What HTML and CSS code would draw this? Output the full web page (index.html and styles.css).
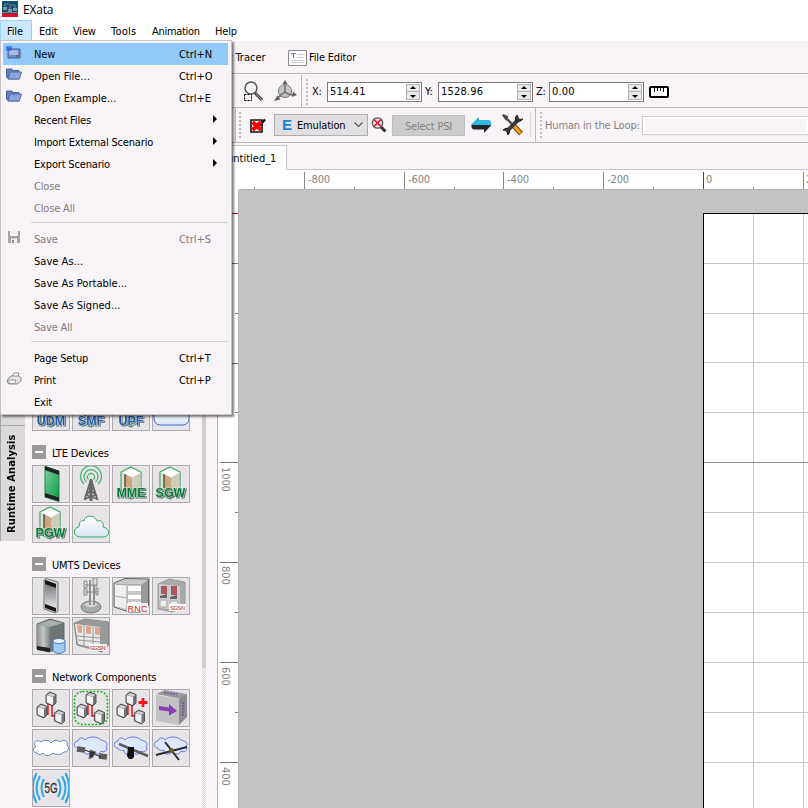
FILE: index.html
```
<!DOCTYPE html>
<html lang="en">
<head>
<meta charset="utf-8">
<title>EXata</title>
<link rel="stylesheet" href="styles.css">
</head>
<body>
<svg class="defs" width="0" height="0">
  <defs>
    <linearGradient id="gGreen" x1="0" y1="0" x2="1" y2="1"><stop offset="0" stop-color="#7fd09a"/><stop offset="1" stop-color="#0b9a48"/></linearGradient>
    <linearGradient id="gGray" x1="0" y1="0" x2="0" y2="1"><stop offset="0" stop-color="#6d6a6f"/><stop offset="1" stop-color="#e9e7ea"/></linearGradient>
    <linearGradient id="gMetal" x1="0" y1="0" x2="1" y2="0"><stop offset="0" stop-color="#8d9192"/><stop offset=".5" stop-color="#c4c7c8"/><stop offset="1" stop-color="#7d8182"/></linearGradient>
    <linearGradient id="gSky" x1="0" y1="0" x2="0" y2="1"><stop offset="0" stop-color="#ffffff"/><stop offset="1" stop-color="#dbe6f5"/></linearGradient>
    <g id="server">
      <path d="M18 1 28 6V27L18 33 8 28V6Z" fill="#efeee8" stroke="#38a860" stroke-width="1.200"/>
      <path d="M18 2 27.500 7 19 11.500 9 7Z" fill="#fff"/>
      <path d="M9 7 19 11.500V31L9 27Z" fill="#c9a67c"/>
      <path d="M19 11.500 27.500 7V26L19 31Z" fill="#cfcdb9"/>
      <path d="M9 7 12 8.500V28L9 27Z" fill="#e9dfcf"/>
      <path d="M12 8V22" stroke="#4d4640" stroke-width="1.400"/>
    </g>
    <g id="node">
      <path d="M0 3 4 0 10 2.500V11L7 14 0 11Z" fill="#77787b" stroke="#444" stroke-width=".9"/>
      <path d="M.8 3.200 7 5V13L.8 10.500Z" fill="#f1f1f1"/>
      <path d="M1 3 4 1 9.500 2.800 7 4.800Z" fill="#cfcfcf"/>
    </g>
    <g id="net">
      <path d="M16 15V25H12M20 15V27H25" fill="none" stroke="#f00000" stroke-width="1.400"/>
      <use href="#node" x="14" y="3"/><use href="#node" x="5" y="15"/><use href="#node" x="22.500" y="21"/>
    </g>
    <path id="blob" d="M5 18C0 18 0 11 5 11 6 7 10 7 12 10 15 6 25 6 28 10 34 11 35 15 33 16 36 21 30 23 28 21 26 26 20 24 19 22 15 26 10 24 11 20 8 21 5 20 5 18Z" fill="#dde8fb" stroke="#6b74e0" stroke-width="1"/>
    <path id="cloud" d="M8 26C0 26-1 17 6 16 6 10 9 9 11 10 12 3 22 4 24 10 29 8 31 13 30 16 38 18 37 26 30 26Z" fill="url(#gSky)"/>
    <g id="folder"><path d="M.5 2H6L7 3.500H13V12H2.500L.5 10Z" fill="#6683bd" stroke="#47639b"/><path d="M4 5H15.500L13.500 12H2Z" fill="#87a4dc" stroke="#47639b" stroke-width=".8"/></g>
  </defs>
</svg>

<div class="window">
  <header class="titlebar">
    <svg class="logo" width="16" height="16" viewBox="0 0 16 16"><path fill="#174d74" d="M0 0h16v13H0z"/><path fill="#e30b2c" d="M0 12.500h16V16H0z"/><path d="M1 6h4v3H1zM6 8h4v3H6zM11 7h4v3h-4z" fill="#7c99aa"/><path d="M3 6V3H7M8 8V4H13V7M0 11.500H16" fill="none" stroke="#62899e"/></svg>
    <span>EXata</span>
  </header>
  <nav class="menubar">
    <span class="m active">File</span><span class="m">Edit</span><span class="m">View</span><span class="m">Tools</span><span class="m">Animation</span><span class="m">Help</span>
  </nav>

  <div class="bar bar1">
    <span class="tracer">Packet Tracer</span>
    <svg class="fe" width="19" height="16" viewBox="0 0 19 16"><path d="M.5.500h18v15H.5z" fill="#fff" stroke="#8b8b8b"/><path d="M3 3.500H8M5.500 3V8" stroke="#77778b"/><path d="M9 4.500H16M9 7.500H16M3 10.500H16M3 12.500H16" stroke="#ccc8e0"/></svg>
    <span>File Editor</span>
  </div>

  <div class="bar bar2">
    <svg class="mag" width="22" height="22" viewBox="0 0 22 22"><path d="M12 12 19 19" stroke="#444" stroke-width="3"/><path d="M13 13 19 19" stroke="#999" stroke-width="1"/><circle cx="8" cy="7" r="6" fill="#f4f4f4" stroke="#555" stroke-width="1.500"/><path d="M1.500 13.500h7v6h-7z" fill="#f7f3f7" stroke="#000" stroke-dasharray="2 1"/></svg>
    <svg class="axes" width="24" height="24" viewBox="0 0 24 24"><path d="M12 14V4M12 14 20 16M12 14 4 19" stroke="#777" stroke-width="2"/><path d="M9.500 5 12 1 14.500 5ZM20 12.500 24 16 19 18ZM4.500 16.500 1 22 7.500 20.500Z" fill="#606060"/><circle cx="12" cy="12" r="6.500" fill="#bbb" fill-opacity=".8" stroke="#777"/><path d="M12 6V13L17 16M12 13 7 16" fill="none" stroke="#666" stroke-width="1.200"/></svg>
    <i class="vline v2"></i><i class="grip"></i>
    <label class="lx">X:</label><span class="spin"><span>514.41</span><i class="steps"></i></span>
    <label class="ly">Y:</label><span class="spin"><span>1528.96</span><i class="steps"></i></span>
    <label class="lz">Z:</label><span class="spin"><span>0.00</span><i class="steps"></i></span>
    <svg class="rule" width="20" height="12" viewBox="0 0 20 12"><rect x="1" y="1" width="18" height="10" rx="1" fill="#fff" stroke="#000" stroke-width="2"/><path d="M5.500 1V6M8.500 1V5M11.500 1V5M14.500 1V6" stroke="#000"/></svg>
  </div>

  <div class="bar bar3">
    <i class="vline v3"></i><i class="grip g3"></i>
    <svg class="redx" width="17" height="15" viewBox="0 0 17 15"><path d="M1 2h11v12H1z" fill="#fff" stroke="#111" stroke-width="1.600"/><path d="M9 8 15 1.500" stroke="#111" stroke-width="2.500"/><path d="M2.500 4 11 12M11 4 2.500 12" stroke="#f00" stroke-width="4"/></svg>
    <span class="combo"><b>E</b><span>Emulation</span><svg width="9" height="6" viewBox="0 0 9 6"><path d="M.5.500 4.500 4.500 8.500.500" fill="none" stroke="#555" stroke-width="1.200"/></svg></span>
    <svg class="magx" width="16" height="16" viewBox="0 0 16 16"><path d="M9 9 14.500 14.500" stroke="#333" stroke-width="3"/><circle cx="6.500" cy="6" r="5.200" fill="#ddd" stroke="#555" stroke-width="1.300"/><path d="M3 2.500 10 9.500M10 2.500 3 9.500" stroke="#e0182d" stroke-width="1.700"/></svg>
    <span class="psi">Select PSI</span>
    <svg class="swap" width="21" height="16" viewBox="0 0 21 16"><path d="M0 7.500 8 0V3H18Q21 4 20 8H1Z" fill="#35b4e6"/><path d="M20.500 8 13 16V12.500H3Q0 12 .5 8Z" fill="#20272c"/></svg>
    <svg class="tools" width="22" height="22" viewBox="0 0 22 22"><path d="M12 12 19 19.500" stroke="#7b4a00" stroke-width="5"/><path d="M12 12 18.500 19" stroke="#ffa21c" stroke-width="3"/><path d="M2 2 12 12" stroke="#444" stroke-width="2.200"/><path d="M1 1 5 3 4 5Z" stroke="#444" stroke-width="2"/><path d="M4.500 17.500 16.500 5.500" stroke="#3b3b3e" stroke-width="4"/><path d="M15 1Q12 4 14 7 18 9 21 5L17.500 5.500 16.500 4ZM6 21Q9 18 7 15 4 13 1 16L4 16.500 5 18Z" fill="#3b3b3e" stroke="#222"/></svg>
    <i class="thin"></i><i class="vline v4"></i><i class="grip g4"></i>
    <span class="hil">Human in the Loop:</span><span class="field"></span>
  </div>

  <div class="tabs"><span class="tab">untitled_1</span></div>

  <main class="body">
    <aside class="side">
      <div class="vtabs"><span class="vt first">Components</span><span class="vt second">Runtime Analysis</span></div>
      <div class="palette">
        <div class="cells core">
          <span class="c"><svg viewBox="0 0 36 36"><use href="#server"/><text class="tg blue" x="18" y="31">UDM</text></svg></span>
          <span class="c"><svg viewBox="0 0 36 36"><use href="#server"/><text class="tg blue" x="18" y="31">SMF</text></svg></span>
          <span class="c"><svg viewBox="0 0 36 36"><use href="#server"/><text class="tg blue" x="18" y="31">UPF</text></svg></span>
          <span class="c"><svg viewBox="0 0 36 36"><rect x="1" y="9" width="35" height="22" rx="6" fill="url(#gSky)" stroke="#3c6fc0"/></svg></span>
        </div>
        <h3><i class="minus"></i>LTE Devices</h3>
        <div class="cells">
          <span class="c"><svg viewBox="0 0 36 36"><path d="M12 .5 26 5V35.500L12 31Z" fill="url(#gGreen)" stroke="#168446"/><path d="M12 0 26 5V9L12 4ZM12 27 26 31.500V35L12 31Z" fill="#222"/></svg></span>
          <span class="c"><svg viewBox="0 0 36 36"><g fill="none" stroke="#4bb277" stroke-width="1.200"><path d="M15.500 13.500A3.500 3.500 0 1 1 20.500 13.500M13.500 16A7 7 0 1 1 22.500 16M11 18A10.500 10.500 0 1 1 25 18"/></g><path d="M18 13 11.500 34M18 13 24.500 34M15 21 23 29 12 33M21 21 13 29 24 33" stroke="#666" stroke-width="1.800" fill="none"/><path d="M18 14V35" stroke="#666" stroke-width="3"/></svg></span>
          <span class="c"><svg viewBox="0 0 36 36"><use href="#server"/><text class="tg" x="18" y="31">MME</text></svg></span>
          <span class="c"><svg viewBox="0 0 36 36"><use href="#server" x="-1"/><text class="tg" x="17.500" y="31">SGW</text></svg></span>
          <span class="c"><svg viewBox="0 0 36 36"><use href="#server" x="-1"/><text class="tg" x="17.500" y="31">PGW</text></svg></span>
          <span class="c"><svg viewBox="0 0 36 36"><use href="#cloud" y="5" stroke="#37a762"/></svg></span>
        </div>
        <h3><i class="minus"></i>UMTS Devices</h3>
        <div class="cells">
          <span class="c"><svg viewBox="0 0 36 36"><path d="M11 2 13 .5 25 4V33L22 35 11 31Z" fill="#ccc" stroke="#777"/><path d="M12 2 23 6V32L12 28Z" fill="url(#gGray)"/><path d="M12 2 23 6V10L12 6ZM12 26 23 30V34L12 30Z" fill="#161616"/></svg></span>
          <span class="c"><svg viewBox="0 0 36 36"><ellipse cx="18" cy="29" rx="10" ry="6" fill="#a9acad" stroke="#777"/><ellipse cx="18" cy="26.500" rx="6" ry="2.500" fill="#d4d6d7"/><path d="M17 2V27M21 2V27" stroke="#8d9192" stroke-width="2"/><path d="M19 2V27" stroke="#e3e5e6"/><path d="M11 3H14V10H11ZM20 0H24V8H20ZM11 11H14V17H11ZM23 10H25V17H23Z" fill="#dcdedf" stroke="#888"/><path d="M12 7H24M12 14H24" stroke="#888"/></svg></span>
          <span class="c"><svg viewBox="0 0 36 36"><path d="M1 5 12 .5 35.500 1V28L28 34H16L1 29Z" fill="#c7c8c8" stroke="#666"/><path d="M2 6 14 8V31L2 28Z" fill="#f0f0f0"/><path d="M15 8H28V31H15Z" fill="#fff"/><path d="M15 13H28V17H15ZM15 21H28V24H15Z" fill="#c5c7c8"/><path d="M2 18 14 20M14 8V31M3 6.500H27" stroke="#aaa" stroke-width="1.200" fill="none"/><path d="M28 7 35 2V25L28 30Z" fill="#999"/><path d="M14 25H35V34H14Z" fill="#fffc"/><text class="rd" x="24.500" y="33.500" font-size="9" textLength="20">RNC</text></svg></span>
          <span class="c"><svg viewBox="0 0 36 36"><path d="M5 6 16 1 32 4V26L20 34 5 31Z" fill="#aaaaac" stroke="#999"/><path d="M6 6 27 8V32L6 30Z" fill="#ccc"/><path d="M8 8H14V16H8ZM18 8H24V17H18Z" fill="#a8595f"/><path d="M7 18 14 16V20H7ZM17 19 24 17V21H17Z" fill="#666"/><path d="M7 22H14V29H7ZM17 23H25V29H17Z" fill="#eee" stroke="#aaa"/><path d="M16 26H33V33H16Z" fill="#fff"/><text class="rd" x="24.500" y="32" font-size="6" textLength="15">SGSN</text></svg></span>
          <span class="c"><svg viewBox="0 0 36 36"><path d="M4 6 17 1 31 5V29L16 34 4 31Z" fill="#6f7475" stroke="#666"/><path d="M4 6 17 9V33L4 31Z" fill="url(#gMetal)"/><path d="M5 6 17 2 30 5 17 9Z" fill="#a6b0ac"/><path d="M4 28 17 30V34L4 32Z" fill="#222"/><path d="M20 23V33Q26 38 32 33V23Z" fill="#a2caf3" stroke="#4b7fb8"/><ellipse cx="26" cy="23" rx="6" ry="2.500" fill="#e3f1ff" stroke="#4b7fb8"/></svg></span>
          <span class="c"><svg viewBox="0 0 36 36"><path d="M1 5 12 1 35.500 4V27L29 34 4 27Z" fill="#999b9b" stroke="#888"/><path d="M2 6 27 9V31L5 26Z" fill="#e8e8e8"/><path d="M4 7 9 7.500V15L5 14.500ZM13 8 18 8.500V16L13 15.500ZM22 9 27 9.500V17L22 16.500Z" fill="#dda38c"/><path d="M11 7V28M20 8V30M4 18 27 20M5 22 27 24" stroke="#999"/><path d="M16 26H34V33H16Z" fill="#fffc"/><text class="rd" x="24.500" y="32" font-size="6" textLength="16">GGSN</text></svg></span>
        </div>
        <h3><i class="minus"></i>Network Components</h3>
        <div class="cells">
          <span class="c"><svg viewBox="0 0 36 36"><use href="#net" x="-1" y="-1"/></svg></span>
          <span class="c"><svg viewBox="0 0 36 36"><rect x="1.500" y="1.500" width="33" height="33" rx="8" fill="none" stroke="#14b814" stroke-width="1.600" stroke-dasharray="2 1.600"/><use href="#net" x="-1" y="-1"/></svg></span>
          <span class="c"><svg viewBox="0 0 36 36"><use href="#net" x="-1" y="-1"/><path d="M30 8V17M25.500 12.500H34.500" stroke="#f31420" stroke-width="2.800"/></svg></span>
          <span class="c"><svg viewBox="0 0 36 36"><path d="M3 4 12 0 34 4 28 9Z" fill="#9b9b9b"/><path d="M3 5 26 9V35L3 31Z" fill="#c2c2c3"/><path d="M26 9 34 4V27L26 35Z" fill="#8c8c8e"/><path d="M11 2.500 24 4.500M30 12V26" stroke="#8157a2" stroke-width="2" stroke-dasharray="2 1"/><path d="M6 16 16 17.500V14L24 21 16 25.500V21.500L6 20Z" fill="#8a3db0"/></svg></span>
          <span class="c"><svg viewBox="0 0 36 36"><path d="M4 23C-1 22 0 17 3 17-1 12 4 9 8 12 12 9 16 10 18 13 21 9 26 10 27 12 31 8 36 12 34 15 37 18 35 22 31 22 28 25 23 25 20 23 16 27 11 26 10 23 8 25 5 25 4 23Z" fill="#fff" stroke="#5f82bb"/></svg></span>
          <span class="c"><svg viewBox="0 0 36 36"><use href="#blob"/><path d="M4 19 12 20M26 26 34 27" stroke="#5b5b5b" stroke-width="5.500"/><path d="M12 20 28 27" stroke="#222"/><path d="M17 20 23 22 20 27 16 29Z" fill="#333" stroke="#777"/></svg></span>
          <span class="c"><svg viewBox="0 0 36 36"><use href="#blob"/><path d="M6 14 35 26" stroke="#5b5b5b" stroke-width="2.500"/><path d="M15 17H21V27L19 29H16L14 26Z" fill="#111"/></svg></span>
          <span class="c"><svg viewBox="0 0 36 36"><use href="#blob"/><path d="M3 25 34 17M12 12 26 30" stroke="#2a2a2a" stroke-width="2"/><circle cx="18.500" cy="20.500" r="2.500" fill="#745922"/></svg></span>
          <span class="c"><svg viewBox="0 0 36 36"><g fill="none" stroke="#2fa5e4" stroke-width="2"><path d="M11 9Q6 18 11 27M7 6Q0 18 7 30M3.500 3Q-4 18 3.500 33M25 9Q30 18 25 27M29 6Q36 18 29 30M32.500 3Q40 18 32.500 33"/></g><text class="g5" x="18" y="23" textLength="13" lengthAdjust="spacingAndGlyphs">5G</text></svg></span>
        </div>
      </div>
      <div class="scroll"><i></i></div>
    </aside>

    <svg class="stage" width="591" height="638" viewBox="217 170 591 638">
      <path fill="#fff" d="M217 170h591v638H217z"/>
      <path fill="#c4c2c5" d="M239 190h569v618H239z"/>
      <g shape-rendering="crispEdges">
        <path fill="#b4b4b6" d="M217 170h1v638h-1zM238 190h1v618h-1zM239 189h569v1H239z"/>
        <path fill="#fff" d="M703 213h105v595H703z"/>
        <path fill="#c9c9c9" d="M753 213h1v595h-1zM803 213h1v595h-1zM703 263h105v1H703zM703 313h105v1H703zM703 362h105v1H703zM703 412h105v1H703zM703 512h105v1H703zM703 562h105v1H703zM703 612h105v1H703zM703 662h105v1H703zM703 712h105v1H703zM703 762h105v1H703z"/>
        <path fill="#8d8d8d" d="M703 462h105v1H703z"/>
        <path fill="#000" d="M703 213h105v1H703zM703 213h1v595h-1z"/>
        <path fill="#88888a" d="M304 172h1v17h-1zM404 172h1v17h-1zM503 172h1v17h-1zM603 172h1v17h-1zM803 172h1v17h-1zM254 187h1v2h-1zM354 187h1v2h-1zM454 187h1v2h-1zM553 187h1v2h-1zM653 187h1v2h-1zM753 187h1v2h-1z"/>
        <path fill="#77777a" d="M220 263h18v1h-18zM235 313h3v1h-3zM220 363h18v1h-18zM235 412h3v1h-3zM220 462h18v1h-18zM235 512h3v1h-3zM220 562h18v1h-18zM235 612h3v1h-3zM220 662h18v1h-18zM235 712h3v1h-3zM220 762h18v1h-18z"/>
        <path fill="#e0001b" d="M703 172h1v17h-1zM220 213h18v1h-18z"/>
      </g>
      <g class="num">
        <text x="308" y="183">-800</text><text x="408" y="183">-600</text><text x="507" y="183">-400</text><text x="607" y="183">-200</text><text x="706" y="183">0</text><text x="806" y="183">200</text>
        <text transform="translate(222 467) rotate(90)">1000</text><text transform="translate(222 566) rotate(90)">800</text><text transform="translate(222 667) rotate(90)">600</text><text transform="translate(222 767) rotate(90)">400</text>
      </g>
    </svg>
  </main>

  <div class="popup">
    <div class="it hot"><svg class="ic" viewBox="0 0 16 16"><path d="M2 4H14V13H2Z" fill="#6889cd" stroke="#4a5f97"/><path d="M3 5H12V10H3Z" fill="#a5b8df"/><path d="M0 3H6M1 5H5M1 1V6M3 1V6M5 1V5" stroke="#245fe9"/><path d="M10 10H13V12H10Z" fill="#666"/></svg><span>New</span><kbd>Ctrl+N</kbd></div>
    <div class="it"><svg class="ic" viewBox="0 0 16 16"><use href="#folder"/></svg><span class="dots">Open File...</span><kbd>Ctrl+O</kbd></div>
    <div class="it"><svg class="ic" viewBox="0 0 16 16"><use href="#folder"/></svg><span class="dots">Open Example...</span><kbd>Ctrl+E</kbd></div>
    <div class="it"><span>Recent Files</span><i class="arrow"></i></div>
    <div class="it"><span>Import External Scenario</span><i class="arrow"></i></div>
    <div class="it"><span>Export Scenario</span><i class="arrow"></i></div>
    <div class="it off"><span>Close</span></div>
    <div class="it off"><span>Close All</span></div>
    <hr>
    <div class="it off"><svg class="ic" viewBox="0 0 16 16"><path d="M2 1H14V13H2Z" fill="#a4a4a6"/><path d="M4 1H12V6H4ZM5 8.500H11V13H5Z" fill="#f2f0f2"/><path d="M6 10H8V13H6Z" fill="#8b8b8d"/></svg><span>Save</span><kbd>Ctrl+S</kbd></div>
    <div class="it"><span class="dots">Save As...</span></div>
    <div class="it"><span class="dots">Save As Portable...</span></div>
    <div class="it"><span class="dots">Save As Signed...</span></div>
    <div class="it off"><span>Save All</span></div>
    <hr>
    <div class="it"><span>Page Setup</span><kbd>Ctrl+T</kbd></div>
    <div class="it"><svg class="ic" viewBox="0 0 16 16"><path d="M6 6 8 2H13L12 7" fill="#fff" stroke="#8b8b8b"/><path d="M2 8 5 5H13L15 7V10L11 13H3L1 11Z" fill="#e4e4e4" stroke="#8b8b8b"/><path d="M3 9H10L9 12.500H3Z" fill="#fff" stroke="#999"/></svg><span>Print</span><kbd>Ctrl+P</kbd></div>
    <div class="it"><span>Exit</span></div>
  </div>
</div>
</body>
</html>
```
FILE: styles.css
```
* { box-sizing: border-box; }
body {
  margin: 0;
  overflow: hidden;
  background: #f7f3f7;
  color: #000;
  font: 11px/14px "DejaVu Sans Condensed", "DejaVu Sans", sans-serif;
  font-stretch: condensed;
  letter-spacing: -0.17px;
}
.defs { position: absolute; }
i { display: block; flex: none; }
svg { flex: none; display: block; }
.window {
  position: relative;
  width: 808px;
  height: 808px;
  display: flex;
  flex-direction: column;
  overflow: hidden;
}
.titlebar {
  height: 20px;
  flex: none;
  background: #fff;
  display: flex;
  align-items: center;
  gap: 5px;
  padding: 0 0 0 2px;
  font: 12px/18px "Open Sans", sans-serif;
}
.logo { margin-top: -2px; }
.menubar {
  height: 21px;
  flex: none;
  background: #fff;
  display: flex;
  white-space: nowrap;
}
.m { height: 21px; line-height: 23px; padding-left: 7px; width: 33px; }
.m.active { width: 32px; background: #cce8ff; border: 1px solid #99d1ff; line-height: 21px; padding-left: 6px; }
.m:nth-child(2) { width: 34px; }
.m:nth-child(3) { width: 38px; }
.m:nth-child(4) { width: 41px; letter-spacing: 0.25px; }
.m:nth-child(5) { width: 63px; letter-spacing: -0.3px; }

.bar {
  flex: none;
  display: flex;
  align-items: center;
  border-bottom: 1px solid #b9b7ba;
  white-space: nowrap;
}
.bar1 { height: 33px; padding: 2px 0 0 200px; }
.bar1 .tracer { width: 88px; letter-spacing: 0; }
.bar1 .fe { margin-right: 2px; }
.bar2 { height: 34px; padding: 1px 0 0 243px; border-top: 1px solid #fff; }
.bar3 { height: 35px; padding-left: 235px; }
.mag { margin-right: 9px; }
.axes { margin: -2px 4px 0 -1px; }
.vline { width: 1px; align-self: stretch; background: #b9b7ba; }
.v2 { margin-right: 4px; margin-top: -1px; }
.grip { width: 2px; height: 26px; background: repeating-linear-gradient(#bcbabd 0 2px, transparent 2px 4px); }
.lx, .ly, .lz { flex: none; padding-top: 1px; }
.lx { width: 19px; padding-left: 4px; }
.ly { width: 16px; padding-left: 3px; }
.lz { width: 16px; padding-left: 3px; }
.spin {
  width: 95px;
  height: 20px;
  flex: none;
  border: 1px solid #7a7a7a;
  background: #fff;
  display: flex;
  align-items: center;
  justify-content: space-between;
  padding: 0 1px 0 2px;
  letter-spacing: 0.2px;
}
.spin span { padding-top: 1px; }
.steps {
  position: relative;
  width: 14px;
  height: 16px;
  border: 1px solid #b5b5b5;
  background: linear-gradient(#e9e7ea 6px, #b5b5b5 6px 7px, #e9e7ea 7px);
}
.steps::before, .steps::after {
  content: "";
  position: absolute;
  left: 3px;
  border: 3px solid transparent;
}
.steps::before { top: -1px; border-bottom-color: #000; border-top-width: 2px; }
.steps::after { bottom: -1px; border-top-color: #000; border-bottom-width: 2px; }
.rule { margin-left: 5px; }
.g3 { margin-left: 3px; }
.redx { margin-left: 9px; }
.combo {
  width: 94px;
  height: 22px;
  flex: none;
  margin-left: 7px;
  border: 1px solid #adadad;
  background: #e2dfe3;
  display: flex;
  align-items: center;
  padding-left: 7px;
}
.combo b { width: 15px; color: #1585d8; font: bold 15px/20px "Liberation Sans", sans-serif; }
.combo span { padding-top: 1px; }
.combo svg { margin-left: auto; margin-right: 4px; }
.magx { margin: 0 5px 0 3px; }
.psi {
  width: 73px;
  height: 21px;
  flex: none;
  border: 1px solid #bfbfbf;
  background: #cccccc;
  color: #838383;
  line-height: 21px;
  text-align: center;
}
.swap { margin-left: 6px; }
.tools { margin-left: 10px; }
.thin { width: 1px; height: 24px; background: #d5d2d6; margin: 0 4px 0 6px; }
.g4 { margin-left: 4px; }
.hil { color: #838383; margin-left: 3px; width: 97px; letter-spacing: -0.15px; padding-top: 2px; }
.field { height: 19px; flex: 1; border: 1px solid #cccccc; border-right: 0; background: #f7f3f7; box-shadow: inset 0 0 0 2px #fff; }

.tabs { height: 27px; flex: none; border-bottom: 1px solid #c6c4c7; padding: 2px 0 0 217px; }
.tab { display: block; width: 70px; height: 25px; padding-left: 9px; background: #fff; border: 1px solid #c6c4c7; border-bottom: 0; line-height: 25px; letter-spacing: 0; }

.body { display: flex; height: 638px; flex: none; }
.side { width: 217px; flex: none; display: flex; overflow: hidden; }
.vtabs { width: 25px; flex: none; display: flex; flex-direction: column; }
.vt {
  writing-mode: vertical-rl;
  transform: rotate(180deg);
  width: 25px;
  background: #dcd9dd;
  border-right: 1px solid #a9a7aa;
  font-weight: bold;
  font-size: 11px;
  line-height: 21px;
  text-align: center;
  letter-spacing: 0.12px;
}
.first { height: 255px; }
.second { height: 116px; border-bottom: 1px solid #aaa8ab; }
.palette { width: 177px; flex: none; padding: 223px 0 0 7px; }
.palette h3 {
  margin: 14px 0 6px;
  height: 14px;
  display: flex;
  gap: 6px;
  font: inherit;
  line-height: 17px;
  letter-spacing: -0.15px;
  white-space: nowrap;
}
.minus { width: 14px; height: 14px; background: linear-gradient(#fff, #fff) center / 8px 2px no-repeat #9b999c; }
.cells { display: grid; grid-template-columns: repeat(4, 38px); grid-auto-rows: 38px; gap: 2px; }
.c { border: 1px solid #adabae; background: #e7e4e8; }
.c svg { width: 36px; height: 36px; overflow: hidden; }
.tg { font: bold 12.5px "Liberation Sans", sans-serif; text-anchor: middle; fill: #087c3c; stroke: #d7e5dc; stroke-width: 1px; paint-order: stroke; filter: drop-shadow(1px 1px 0 #6a6f70); letter-spacing: 0; }
.tg.blue { fill: #235c9f; stroke: #d8e2ef; }
.rd { font-family: "Liberation Sans", sans-serif; text-anchor: middle; fill: #c9282f; letter-spacing: 0; }
.g5 { font: 14px "Liberation Sans", sans-serif; text-anchor: middle; fill: #333; stroke: #333; stroke-width: .3px; letter-spacing: 0; }
.scroll { width: 4px; margin-left: -7px; height: 638px; background: repeating-conic-gradient(#d8d5d9 0 25%, #f7f3f7 0 50%) 0 0 / 2px 2px; }
.side .scroll { margin-left: 0; }
.scroll i { width: 4px; height: 498px; background: #d1ced2; }
.num { fill: #858585; font-size: 11px; letter-spacing: -0.1px; }

.popup {
  position: absolute;
  left: 0;
  top: 40px;
  width: 232px;
  height: 375px;
  padding: 2px 3px 0 2px;
  background: #f7f3f7;
  border: 1px solid #c5c3c6;
  box-shadow: 2px 2px 2px rgba(0, 0, 0, .5);
}
.it { position: relative; height: 22px; display: flex; line-height: 24px; padding-left: 31px; white-space: nowrap; }
.it kbd { position: absolute; left: 176px; font: inherit; line-height: 24px; letter-spacing: -0.05px; }
.dots { letter-spacing: 0.03px; }
.hot { background: #91c9f7; }
.off { color: #7d7b7e; }
.ic { position: absolute; left: 3px; top: 2px; width: 16px; height: 16px; }
.arrow { position: absolute; left: 210px; top: 6px; border: 4px solid transparent; border-left-color: #000; border-right-width: 0; }
.popup hr { height: 1px; margin: 3px 0 5px 28px; border: 0; background: #d5d2d6; }
```
